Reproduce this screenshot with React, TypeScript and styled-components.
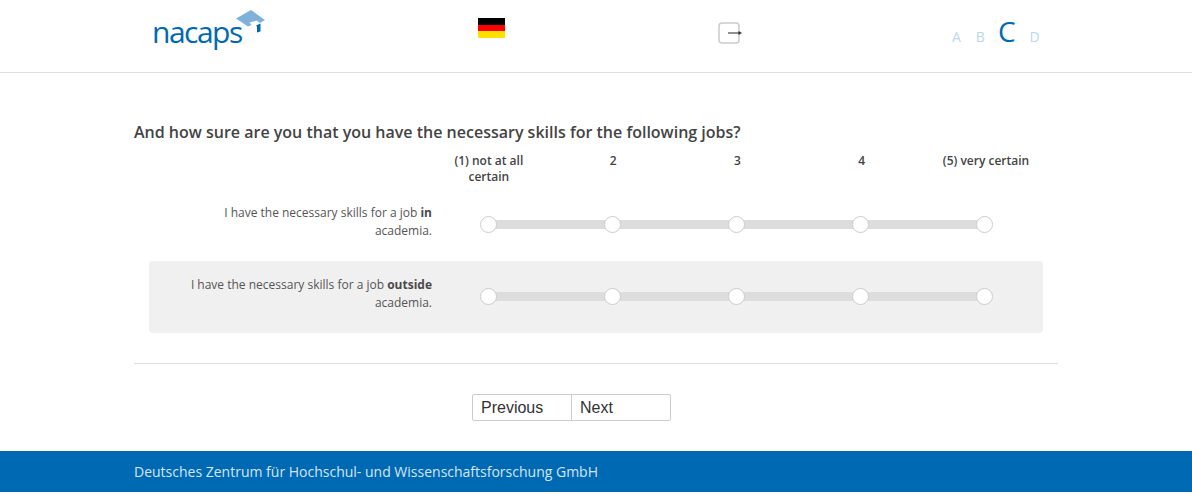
import React from "react";
import styled, { createGlobalStyle } from "styled-components";

const Global = createGlobalStyle`
  html, body { margin: 0; padding: 0; background: #fff; }
  body { font-family: "Open Sans", "Liberation Sans", sans-serif; color: #444; }
  * { box-sizing: border-box; }
`;

const Header = styled.header`
  height: 73px;
  border-bottom: 1px solid #ddd;
  padding-left: 134px;
  display: grid;
  grid-template-columns: 344px 240px 234px auto;
  justify-content: start;
`;
const LogoCell = styled.div`
  display: flex;
  align-items: flex-start;
  padding: 8px 0 0 18px;
`;
const Wordmark = styled.span`
  width: 82px;
  font-family: "Open Sans", sans-serif;
  font-size: 30px;
  line-height: 40px;
  letter-spacing: -1.5px;
  color: #0069b4;
  margin-top: 4px;
  white-space: nowrap;
`;
const LogoMark = styled.svg`
  width: 32px;
  height: 26px;
  flex: none;
`;
const FlagCell = styled.div`
  padding-top: 18px;
`;
const Flag = styled.div`
  width: 27px;
  height: 20px;
  background: linear-gradient(#000 0 33.3%, #f00 33.3% 66.6%, #ffe100 66.6% 100%);
`;
const LogoutCell = styled.div`
  padding-top: 22px;
`;
const LogoutIcon = styled.svg`
  width: 25px;
  height: 23px;
  display: block;
`;
const Steps = styled.div`
  display: flex;
  align-items: baseline;
  height: 46px;
  padding-top: 12px;
`;
const Step = styled.span<{ $active?: boolean; $gap: number }>`
  font-size: ${(p) => (p.$active ? "28px" : "14px")};
  line-height: 38px;
  color: ${(p) => (p.$active ? "#0069b4" : "#b9d7ee")};
  margin-right: ${(p) => p.$gap}px;
`;

const Main = styled.main`
  width: 924px;
  margin-left: 134px;
  padding-top: 48px;
`;
const Question = styled.h2`
  margin: 0;
  font-size: 16px;
  font-weight: 600;
  line-height: 22px;
  color: #444;
`;
const ScaleHead = styled.div`
  display: grid;
  grid-template-columns: repeat(5, 124.3px);
  margin: 10px 0 0 292.7px;
  height: 36px;
`;
const ScaleLabel = styled.div`
  font-size: 12px;
  font-weight: 600;
  line-height: 16px;
  text-align: center;
  padding: 0 25px;
  color: #444;
`;
const WideScaleLabel = styled(ScaleLabel)`
  padding: 0;
`;
const Row = styled.div<{ $shaded?: boolean }>`
  margin-left: 15px;
  width: 894px;
  height: 72px;
  display: flex;
  align-items: flex-start;
  border-radius: 4px;
  background: ${(p) => (p.$shaded ? "#f0f0f0" : "transparent")};
`;
const Statement = styled.div`
  width: 283px;
  padding: 15px 0 0 40px;
  font-size: 12px;
  line-height: 18px;
  text-align: right;
  color: #555;
  b { font-weight: 700; color: #4a4a4a; }
`;
const Slider = styled.div`
  margin: 27px 0 0 48px;
  width: 513px;
  height: 17px;
  display: flex;
  justify-content: space-between;
  background: linear-gradient(#ddd, #ddd) center / calc(100% - 16px) 9px no-repeat;
`;
const Handle = styled.span`
  width: 17px;
  height: 17px;
  border-radius: 50%;
  background: #fff;
  border: 1px solid #ccc;
`;
const Divider = styled.hr`
  margin: 30px 0 0;
  border: 0;
  border-top: 1px solid #ddd;
`;
const Nav = styled.nav`
  display: flex;
  justify-content: flex-start;
  margin: 30px 0 0 338px;
  height: 57px;
`;
const NavButton = styled.button<{ $pos: "left" | "right" }>`
  width: 100px;
  height: 27px;
  padding: 0 0 0 8px;
  text-align: left;
  background: #fff;
  color: #333;
  font-family: "Liberation Sans", Arial, sans-serif;
  font-size: 16px;
  border: 1px solid #ccc;
  border-radius: ${(p) => (p.$pos === "left" ? "2px 0 0 2px" : "0 2px 2px 0")};
  margin-left: ${(p) => (p.$pos === "right" ? "-1px" : "0")};
`;
const Footer = styled.footer`
  height: 41px;
  background: #0069b4;
  color: #d5e6f3;
  font-size: 14px;
  line-height: 41px;
  padding-left: 134px;
`;

const Row5 = () => (
  <Slider>
    {[0, 1, 2, 3, 4].map((i) => (
      <Handle key={i} />
    ))}
  </Slider>
);

export default function App() {
  return (
    <>
      <Global />
      <Header>
        <LogoCell>
          <Wordmark>nacaps</Wordmark>
          <LogoMark viewBox="0 0 32 26">
            <path d="M2 10.5 L17 2 L31 12 L26 15 L22.5 12.5 L15.5 14.5 L17.5 17 L14 18.5 Z" fill="#7fb2da" />
            <path d="M22 17.5 L26.5 15.5 V23.5 L23 24.5 V18.5 Z" fill="#0069b4" />
          </LogoMark>
        </LogoCell>
        <FlagCell>
          <Flag />
        </FlagCell>
        <LogoutCell>
          <LogoutIcon viewBox="0 0 25 23">
            <rect x="1" y="1" width="20" height="20" rx="3" fill="#fff" stroke="#ccc" strokeWidth="1.5" />
            <path d="M10 11 H21" stroke="#444" strokeWidth="1.2" />
            <path d="M20.5 9 L24 11 L20.5 13 Z" fill="#333" />
          </LogoutIcon>
        </LogoutCell>
        <Steps>
          <Step $gap={15}>A</Step>
          <Step $gap={13}>B</Step>
          <Step $active $gap={14}>C</Step>
          <Step $gap={0}>D</Step>
        </Steps>
      </Header>
      <Main>
        <Question>And how sure are you that you have the necessary skills for the following jobs?</Question>
        <ScaleHead>
          <ScaleLabel>(1) not at all certain</ScaleLabel>
          <ScaleLabel>2</ScaleLabel>
          <ScaleLabel>3</ScaleLabel>
          <ScaleLabel>4</ScaleLabel>
          <WideScaleLabel>(5) very certain</WideScaleLabel>
        </ScaleHead>
        <Row>
          <Statement>
            I have the necessary skills for a job <b>in</b> academia.
          </Statement>
          <Row5 />
        </Row>
        <Row $shaded>
          <Statement>
            I have the necessary skills for a job <b>outside</b> academia.
          </Statement>
          <Row5 />
        </Row>
        <Divider />
        <Nav>
          <NavButton $pos="left">Previous</NavButton>
          <NavButton $pos="right">Next</NavButton>
        </Nav>
      </Main>
      <Footer>Deutsches Zentrum für Hochschul- und Wissenschaftsforschung GmbH</Footer>
    </>
  );
}
